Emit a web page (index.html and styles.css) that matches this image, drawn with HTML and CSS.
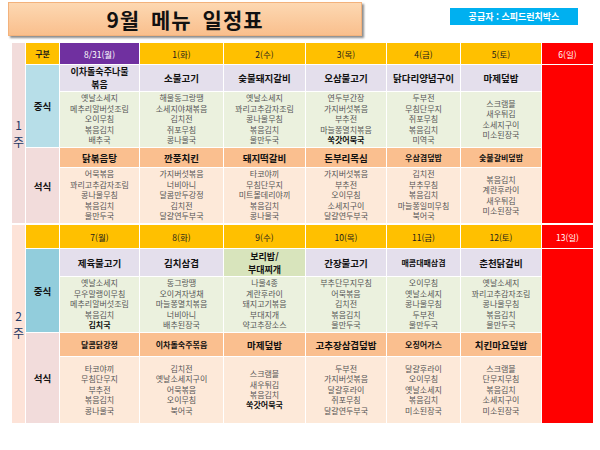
FILE: index.html
```html
<!DOCTYPE html>
<html lang="ko">
<head>
<meta charset="utf-8">
<title>9월 메뉴 일정표</title>
<link rel="stylesheet" href="styles.css">
</head>
<body>
<div class="page">
  <header class="top">
    <div class="banner"><h1 class="title">9월 메뉴 일정표</h1></div>
    <div class="supplier">공급자 : 스피드런치박스</div>
  </header>
  <div class="schedule">
    <section class="week w1">
      <div class="wlabel w1l"><span>1</span><span>주</span></div>
      <div class="hd gubun">구분</div>
      <div class="hd purple">8/31(월)</div>
      <div class="hd">1(화)</div>
      <div class="hd">2(수)</div>
      <div class="hd">3(목)</div>
      <div class="hd">4(금)</div>
      <div class="hd">5(토)</div>
      <div class="hd sun-h">6(일)</div>

      <div class="meal lunch1">중식</div>
      <div class="lm two">이차돌숙주나물<br>볶음</div>
      <div class="lm">소불고기</div>
      <div class="lm">숯불돼지갈비</div>
      <div class="lm">오삼불고기</div>
      <div class="lm">닭다리양념구이</div>
      <div class="lm">마제덮밥</div>
      <div class="sun"></div>

      <div class="li">옛날소세지<br>메추리알버섯조림<br>오이무침<br>볶음김치<br>배추국</div>
      <div class="li">해물동그랑땡<br>소세지야채볶음<br>김치전<br>쥐포무침<br>콩나물국</div>
      <div class="li">옛날소세지<br>꽈리고추감자조림<br>콩나물무침<br>볶음김치<br>물만두국</div>
      <div class="li">연두부간장<br>가지버섯볶음<br>부추전<br>마늘쫑멸치볶음<br><b class="hl">쑥갓어묵국</b></div>
      <div class="li">두부전<br>무침단무지<br>쥐포무침<br>볶음김치<br>미역국</div>
      <div class="li">스크램블<br>새우튀김<br>소세지구이<br>미소된장국</div>

      <div class="meal dinner">석식</div>
      <div class="dm">닭볶음탕</div>
      <div class="dm">깐풍치킨</div>
      <div class="dm">돼지떡갈비</div>
      <div class="dm">돈부리목심</div>
      <div class="dm sm">우삼겹덮밥</div>
      <div class="dm sm">숯불갈비덮밥</div>

      <div class="di">어묵볶음<br>꽈리고추감자조림<br>콩나물무침<br>볶음김치<br>물만두국</div>
      <div class="di">가지버섯볶음<br>너비아니<br>달콤만두강정<br>김치전<br>달걀연두부국</div>
      <div class="di">타코야끼<br>무침단무지<br>미트볼데리야끼<br>볶음김치<br>콩나물국</div>
      <div class="di">가지버섯볶음<br>부추전<br>오이무침<br>소세지구이<br>달걀연두부국</div>
      <div class="di">김치전<br>부추무침<br>볶음김치<br>마늘쫑일미무침<br>북어국</div>
      <div class="di">볶음김치<br>계란후라이<br>새우튀김<br>미소된장국</div>
    </section>

    <section class="week w2">
      <div class="wlabel w2l"><span>2</span><span>주</span></div>
      <div class="hd"></div>
      <div class="hd">7(월)</div>
      <div class="hd">8(화)</div>
      <div class="hd">9(수)</div>
      <div class="hd">10(목)</div>
      <div class="hd">11(금)</div>
      <div class="hd">12(토)</div>
      <div class="hd sun-h">13(일)</div>

      <div class="meal lunch2">중식</div>
      <div class="lm">제육불고기</div>
      <div class="lm">김치삼겹</div>
      <div class="lm green two">보리밥/<br>부대찌개</div>
      <div class="lm">간장불고기</div>
      <div class="lm sm">매콤대패삼겹</div>
      <div class="lm">춘천닭갈비</div>
      <div class="sun"></div>

      <div class="li">옛날소세지<br>무우말랭이무침<br>메추리알버섯조림<br>볶음김치<br><b class="hl">김치국</b></div>
      <div class="li">동그랑땡<br>오이겨자냉채<br>마늘쫑멸치볶음<br>너비아니<br>배추된장국</div>
      <div class="li">나물4종<br>계란후라이<br>돼지고기볶음<br>부대지개<br>약고추장소스</div>
      <div class="li">부추단무지무침<br>어묵볶음<br>김치전<br>볶음김치<br>물만두국</div>
      <div class="li">오이무침<br>옛날소세지<br>콩나물무침<br>두부전<br>물만두국</div>
      <div class="li">옛날소세지<br>꽈리고추감자조림<br>콩나물무침<br>볶음김치<br>물만두국</div>

      <div class="meal dinner">석식</div>
      <div class="dm sm">달콤닭강정</div>
      <div class="dm sm">이차돌숙주볶음</div>
      <div class="dm">마제덮밥</div>
      <div class="dm">고추장삼겹덮밥</div>
      <div class="dm sm">오징어가스</div>
      <div class="dm">치킨마요덮밥</div>

      <div class="di">타코야끼<br>무침단무지<br>부추전<br>볶음김치<br>콩나물국</div>
      <div class="di">김치전<br>옛날소세지구이<br>어묵볶음<br>오이무침<br>북어국</div>
      <div class="di">스크램블<br>새우튀김<br>볶음김치<br><b class="hl">쑥갓어묵국</b></div>
      <div class="di">두부전<br>가지버섯볶음<br>달걀후라이<br>쥐포무침<br>달걀연두부국</div>
      <div class="di">달걀후라이<br>오이무침<br>옛날소세지<br>볶음김치<br>미소된장국</div>
      <div class="di">스크램블<br>단무지무침<br>볶음김치<br>소세지구이<br>미소된장국</div>
    </section>
  </div>
</div>
</body>
</html>
```

FILE: styles.css
```css
* {
  box-sizing: border-box;
  margin: 0;
  padding: 0;
}

body {
  margin: 0;
  background: #ffffff;
  font-family: "Noto Sans CJK KR", "Noto Sans", sans-serif;
  color: #222222;
}

.top {
  display: flex;
  justify-content: space-between;
  align-items: flex-start;
  height: 43px;
  padding: 2px 22px 0 8px;
}

.banner {
  width: 354px;
  height: 34px;
  background: linear-gradient(#fdd8b2, #f9bf8d);
  border: 1px solid #f3b27c;
  box-shadow: 2px 2px 2px rgba(0, 0, 0, 0.45);
  display: flex;
  align-items: center;
  justify-content: center;
}

.title {
  font-size: 21px;
  font-weight: 700;
  letter-spacing: 1px;
  word-spacing: 4px;
  line-height: 1;
  color: #111111;
}

.supplier {
  margin-top: 6px;
  width: 128px;
  height: 17px;
  background: #00b0f0;
  color: #ffffff;
  font-size: 9px;
  font-weight: 700;
  display: flex;
  align-items: center;
  justify-content: center;
}

.schedule {
  margin-left: 12px;
  width: 581px;
  display: flex;
  flex-direction: column;
  gap: 2px;
}

.week {
  display: grid;
  grid-template-columns: 13px 33px 79px 83px 81px 80px 73px 80px 51px;
  gap: 1px;
}

.w1 {
  grid-template-rows: 21px 26px 55px 19px 55px;
}

.w2 {
  grid-template-rows: 23px 27px 55px 23px 66px;
}

.week > div {
  display: flex;
  flex-direction: column;
  align-items: center;
  justify-content: center;
  text-align: center;
}

.wlabel {
  grid-column: 1;
  grid-row: 1 / span 5;
  font-size: 12px;
  line-height: 17px;
  color: #1f3864;
}

.wlabel span {
  display: block;
}

.w1l {
  background: #f2dcdb;
}

.w2l {
  background: #fde3d8;
}

.hd {
  background: #ffc000;
  font-size: 8.5px;
  color: #1a1a1a;
}

.gubun {
  font-size: 8px;
  font-weight: 700;
}

.purple {
  background: #7030a0;
  color: #ffffff;
}

.sun-h {
  background: #ff0000;
  color: #ffffff;
}

.meal {
  grid-row: span 2;
  font-size: 9.5px;
  font-weight: 700;
  color: #111111;
}

.lunch1 {
  background: #b7dee8;
}

.lunch2 {
  background: #92cddc;
}

.dinner {
  background: #f2dcdb;
}

.sun {
  grid-row: span 4;
  background: #ff0000;
}

.lm {
  background: #e4dfec;
}

.dm {
  background: #fabf8f;
}

.lm,
.dm {
  font-size: 9.5px;
  font-weight: 700;
  line-height: 12px;
  color: #111111;
}

.week > .two {
  font-size: 9px;
  line-height: 13px;
}

.week > .sm {
  font-size: 8px;
}

.week > .green {
  background: #d8e4bc;
}

.li {
  background: #ebf1de;
}

.di {
  background: #fde9d9;
}

.li,
.di {
  font-size: 8px;
  line-height: 10.4px;
  color: #555555;
}

.hl {
  font-weight: 700;
  color: #111111;
}
```
